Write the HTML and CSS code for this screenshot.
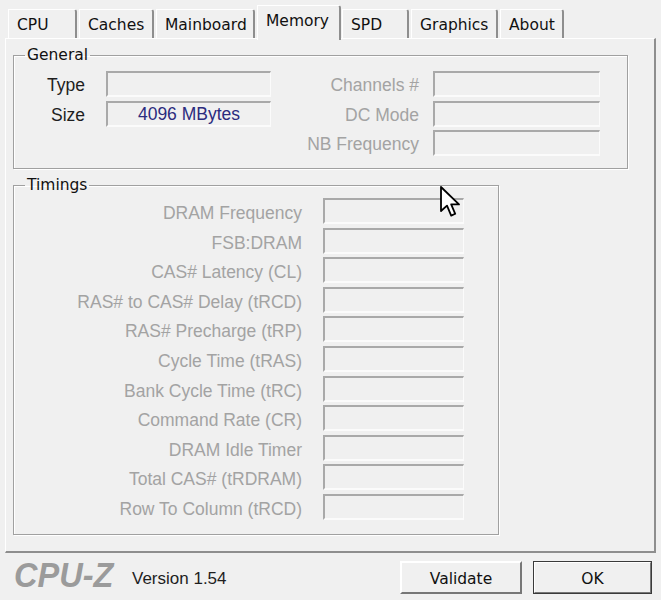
FILE: index.html
```html
<!DOCTYPE html>
<html>
  <head>
    <title>CPU-Z</title>
    <link rel="stylesheet" href="styles.css">
  </head>
  <body>
    <div class="window">
      <div class="tabs">
        <div class="tab tab-cpu">CPU</div>
        <div class="tab tab-caches">Caches</div>
        <div class="tab tab-mainboard">Mainboard</div>
        <div class="tab tab-memory active">Memory</div>
        <div class="tab tab-spd">SPD</div>
        <div class="tab tab-graphics">Graphics</div>
        <div class="tab tab-about">About</div>
      </div>

      <div class="panel">
        <fieldset class="group general">
          <legend>General</legend>
          <div class="general-grid">
            <span class="label label-on">Type</span>
            <div class="field field-left"></div>
            <span class="label label-off label-right">Channels #</span>
            <div class="field field-right"></div>

            <span class="label label-on">Size</span>
            <div class="field field-left value">4096 MBytes</div>
            <span class="label label-off label-right">DC Mode</span>
            <div class="field field-right"></div>

            <span></span>
            <span></span>
            <span class="label label-off label-right">NB Frequency</span>
            <div class="field field-right"></div>
          </div>
        </fieldset>

        <fieldset class="group timings">
          <legend>Timings</legend>
          <div class="timings-grid">
            <span class="label label-off">DRAM Frequency</span>
            <div class="field"></div>
            <span class="label label-off">FSB:DRAM</span>
            <div class="field"></div>
            <span class="label label-off">CAS# Latency (CL)</span>
            <div class="field"></div>
            <span class="label label-off">RAS# to CAS# Delay (tRCD)</span>
            <div class="field"></div>
            <span class="label label-off">RAS# Precharge (tRP)</span>
            <div class="field"></div>
            <span class="label label-off">Cycle Time (tRAS)</span>
            <div class="field"></div>
            <span class="label label-off">Bank Cycle Time (tRC)</span>
            <div class="field"></div>
            <span class="label label-off">Command Rate (CR)</span>
            <div class="field"></div>
            <span class="label label-off">DRAM Idle Timer</span>
            <div class="field"></div>
            <span class="label label-off">Total CAS# (tRDRAM)</span>
            <div class="field"></div>
            <span class="label label-off">Row To Column (tRCD)</span>
            <div class="field"></div>
          </div>
        </fieldset>
      </div>

      <div class="footer">
        <span class="logo">CPU-Z</span>
        <span class="version">Version 1.54</span>
        <div class="buttons">
          <button class="btn btn-validate">Validate</button>
          <button class="btn btn-ok">OK</button>
        </div>
      </div>

      <svg class="cursor" width="24" height="34" viewBox="0 0 12 17">
        <path d="M0.5 0.5 L0.5 12.5 L3.5 9.8 L5.6 14.8 L7.6 13.9 L5.6 9.2 L9.5 9.2 Z"
              fill="#ffffff" stroke="#000000" stroke-width="0.9" stroke-linejoin="round"/>
      </svg>
    </div>
  </body>
</html>
```

FILE: styles.css
```css
:root {
  --bg: #f0f0f0;
  --dark: #a0a0a0;
  --light: #ffffff;
  --text: #1e1e1e;
  --disabled: #a3a3a3;
}

html,
body {
  margin: 0;
  padding: 0;
  background: var(--bg);
  width: 661px;
  height: 600px;
  overflow: hidden;
}

body {
  font-family: "Liberation Sans", Arial, sans-serif;
  color: var(--text);
}

.window {
  position: relative;
  width: 661px;
  height: 600px;
}

/* Tab strip */
.tabs {
  display: flex;
  align-items: flex-end;
  height: 38px;
  padding-left: 8px;
  font-family: "DejaVu Sans", Tahoma, sans-serif;
  font-size: 15.5px;
}

.tab {
  height: 29px;
  box-sizing: border-box;
  padding: 6px 0 0 8px;
  border-top: 1px solid var(--light);
  border-left: 1px solid var(--light);
  border-right: 2px solid #8e8e8e;
  border-top-right-radius: 3px;
  margin-right: 2px;
  color: #111;
}

.tab-cpu { width: 69px; }
.tab-caches { width: 75px; }
.tab-mainboard { width: 99px; }
.tab-spd { width: 67px; }
.tab-graphics { width: 87px; }
.tab-about { width: 64px; }

.tab.active {
  width: 84px;
  height: 35px;
  padding-top: 6px;
  margin-bottom: -2px;
  position: relative;
  z-index: 2;
  background: var(--bg);
}

.tab-spd {
  margin-left: -1px;
}

/* Main panel */
.panel {
  height: 515px;
  box-sizing: border-box;
  margin: 0 5px;
  border-top: 1px solid var(--light);
  border-left: 1px solid var(--light);
  border-right: 2px solid #8e8e8e;
  border-bottom: 2px solid #8e8e8e;
  padding: 7px 0 0 7px;
}

.group {
  margin: 0;
  border: 1px solid var(--dark);
  box-shadow: 1px 1px 0 var(--light), inset 1px 1px 0 var(--light);
  padding: 0;
}

.group legend {
  font-family: "DejaVu Sans", Tahoma, sans-serif;
  font-size: 15.5px;
  line-height: 18px;
  color: #111;
  margin-left: 11px;
  padding: 0 2px;
}

.general {
  width: 615px;
  height: 123px;
  box-sizing: border-box;
}

.timings {
  width: 486px;
  height: 359px;
  box-sizing: border-box;
  margin-top: 7px;
}

.general-grid {
  display: grid;
  grid-template-columns: 92px 165px 162px 167px;
  grid-auto-rows: 26px;
  row-gap: 3.6px;
  padding-top: 7px;
}

.timings-grid {
  display: grid;
  grid-template-columns: 309px 141px;
  grid-auto-rows: 26px;
  row-gap: 3.6px;
  padding-top: 4px;
}

.label {
  font-size: 17.5px;
  line-height: 30px;
  text-align: right;
  padding-right: 21px;
  white-space: nowrap;
}

.general .label {
  line-height: 28px;
}

.label-right {
  padding-right: 14px;
}

.label-on {
  color: var(--text);
}

.label-off {
  color: var(--disabled);
}

.field {
  box-sizing: border-box;
  border-top: 2px solid #a9a9a9;
  border-left: 2px solid #a9a9a9;
  border-right: 1px solid #fbfbfb;
  border-bottom: 2px solid #fbfbfb;
  background: var(--bg);
}

.value {
  font-size: 17.5px;
  line-height: 22px;
  text-align: center;
  color: #2b2b7e;
}

/* Bottom bar */
.footer {
  display: flex;
  align-items: center;
  height: 45px;
  padding: 0 9px 0 14px;
}

.logo {
  display: inline-block;
  width: 98px;
  font-size: 35px;
  font-weight: bold;
  font-style: italic;
  color: #9b9b9b;
  transform: scaleX(0.93);
  transform-origin: left center;
  white-space: nowrap;
  margin-top: -2px;
}

.version {
  font-size: 17px;
  color: var(--text);
  margin-left: 20px;
  margin-top: 6px;
}

.buttons {
  display: flex;
  gap: 11px;
  margin-left: auto;
  margin-top: 4px;
}

.btn {
  height: 33px;
  box-sizing: border-box;
  background: var(--bg);
  font-family: "DejaVu Sans", Tahoma, sans-serif;
  font-size: 15.5px;
  color: #111;
  border-top: 2px solid var(--light);
  border-left: 2px solid var(--light);
  border-right: 2px solid #777;
  border-bottom: 2px solid #777;
  padding: 2px 0 0 0;
}

.btn-validate {
  width: 122px;
}

.btn-ok {
  width: 119px;
  outline: 1px solid #3a3a3a;
  outline-offset: -1px;
}

/* Mouse pointer over the timings box */
.cursor {
  position: absolute;
  left: 440px;
  top: 186px;
}
```
